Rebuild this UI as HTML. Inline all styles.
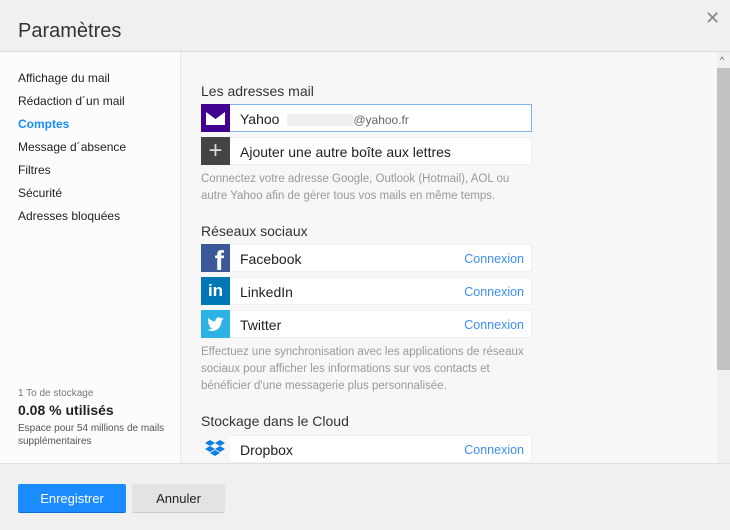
<!DOCTYPE html>
<html><head><meta charset="utf-8"><style>
*{margin:0;padding:0;box-sizing:border-box}
body{width:730px;height:530px;overflow:hidden;font-family:"Liberation Sans",sans-serif;background:#f0f0f0;position:relative;color:#222}
.hdr{position:absolute;left:0;top:0;width:730px;height:52px;background:#f0f0f0;border-bottom:1px solid #dcdcdc}
.hdr h1{position:absolute;left:18px;top:20px;font-weight:normal;font-size:20px;color:#333}
.x{position:absolute;left:705px;top:8px;font-size:18px;color:#888}
.side{position:absolute;left:0;top:52px;width:181px;height:411px;background:#fcfcfc;border-right:1px solid #eee}
.side a{position:absolute;left:18px;font-size:12px;color:#222}
.main{position:absolute;left:182px;top:52px;width:535px;height:411px;background:#f7f7f7}
.sb{position:absolute;left:717px;top:52px;width:13px;height:411px;background:#f0f0f0}
.thumb{position:absolute;left:717px;top:68px;width:13px;height:302px;background:#c1c1c1}
.h{position:absolute;left:201px;font-size:14px;color:#333}
.row{position:absolute;left:201px;width:331px;height:28px;background:#fff;border:1px solid #f0f0f0}
.row .ic{position:absolute;left:-1px;top:-1px;width:29px;height:28px}
.row .t{position:absolute;left:38px;top:6px;font-size:14px;color:#222}
.row .c{position:absolute;right:7px;top:7px;font-size:12.5px;color:#3d8ff0}
.d{position:absolute;left:201px;font-size:11.5px;color:#999;line-height:17px;width:360px}
.ft{position:absolute;left:0;top:463px;width:730px;height:67px;background:#f0f0f0;border-top:1px solid #e0e0e0}
.b{position:absolute;top:484px;height:29px;border-radius:2px;font-size:13px;text-align:center;line-height:29px}
</style></head><body>
<div class="hdr"><h1>Paramètres</h1><div class="x">✕</div></div>
<div class="side">
<a style="top:19px">Affichage du mail</a>
<a style="top:42px">Rédaction d´un mail</a>
<a style="top:65px;color:#1a8cff;font-weight:bold">Comptes</a>
<a style="top:88px">Message d´absence</a>
<a style="top:111px">Filtres</a>
<a style="top:134px">Sécurité</a>
<a style="top:157px">Adresses bloquées</a>
<div style="position:absolute;left:18px;top:336px;font-size:10px;color:#777">1 To de stockage</div>
<div style="position:absolute;left:18px;top:350px;font-size:14px;font-weight:bold;color:#222">0.08 % utilisés</div>
<div style="position:absolute;left:18px;top:370px;font-size:10px;color:#555;line-height:13px">Espace pour 54 millions de mails<br>supplémentaires</div>
</div>
<div class="main"></div>
<div class="sb"><div style="position:absolute;left:3px;top:3px;font-size:9px;color:#555">^</div></div>
<div class="thumb"></div>
<div class="h" style="top:83px">Les adresses mail</div>
<div class="row" style="top:104px;border-color:#7fb6ef">
<div class="ic" style="background:#400090"><svg width="29" height="28"><rect x="5" y="8" width="19" height="13" fill="#fff"/><path d="M5 8 L14.5 15 L24 8Z" fill="#400090"/></svg></div>
<div class="t">Yahoo <span style="display:inline-block;width:66px;height:12px;background:#eee;vertical-align:middle;margin-left:4px"></span><span style="font-size:12px;color:#666">@yahoo.fr</span></div></div>
<div class="row" style="top:137px"><div class="ic" style="background:#444;color:#ddd;font-size:24px;text-align:center;line-height:27px">+</div><div class="t">Ajouter une autre boîte aux lettres</div></div>
<div class="d" style="top:171px">Connectez votre adresse Google, Outlook (Hotmail), AOL ou<br>autre Yahoo afin de gérer tous vos mails en même temps.</div>
<div class="h" style="top:223px">Réseaux sociaux</div>
<div class="row" style="top:244px"><div class="ic" style="background:#3b5998;color:#fff;font-weight:bold;font-size:28px;text-align:right;padding-right:6px;line-height:34px;overflow:hidden">f</div><div class="t">Facebook</div><div class="c">Connexion</div></div>
<div class="row" style="top:277px"><div class="ic" style="background:#0077b5;color:#fff;font-weight:bold;font-size:17px;text-align:center;line-height:28px">in</div><div class="t">LinkedIn</div><div class="c">Connexion</div></div>
<div class="row" style="top:310px"><div class="ic" style="background:#2cb2e4"><svg width="29" height="28"><path d="M23 9c-.7.3-1.3.4-2 .5.7-.4 1.3-1.1 1.5-1.9-.7.4-1.4.7-2.2.8a3.4 3.4 0 0 0-5.8 3.1C11.7 11.4 9.2 10 7.5 8c-1 1.6-.4 3.7 1 4.6-.5 0-1-.2-1.5-.4 0 1.7 1.2 3.1 2.7 3.4-.5.1-1 .2-1.5.1.4 1.4 1.7 2.3 3.2 2.4A6.9 6.9 0 0 1 6 19.5c6.8 4 14.7-.6 14.5-8.7.7-.5 1.3-1.1 1.8-1.8z" fill="#fff"/></svg></div><div class="t">Twitter</div><div class="c">Connexion</div></div>
<div class="d" style="top:344px">Effectuez une synchronisation avec les applications de réseaux<br>sociaux pour afficher les informations sur vos contacts et<br>bénéficier d'une messagerie plus personnalisée.</div>
<div class="h" style="top:413px">Stockage dans le Cloud</div>
<div class="row" style="top:435px"><div class="ic" style="background:#f7f7f7"><svg width="29" height="28"><g fill="#0d7ee5"><path d="M9 5l5 3-5 3-5-3z"/><path d="M19 5l5 3-5 3-5-3z"/><path d="M9 11l5 3-5 3-5-3z"/><path d="M19 11l5 3-5 3-5-3z"/><path d="M14 15l5 3-5 3-5-3z"/></g></svg></div><div class="t">Dropbox</div><div class="c">Connexion</div></div>
<div class="ft"></div>
<div class="b" style="left:18px;width:108px;background:#1a8cff;color:#fff;border-bottom:1px solid #0a6fd0">Enregistrer</div>
<div class="b" style="left:132px;width:93px;background:#e3e3e6;color:#222;border-bottom:1px solid #c8c8cc">Annuler</div>
</body></html>
